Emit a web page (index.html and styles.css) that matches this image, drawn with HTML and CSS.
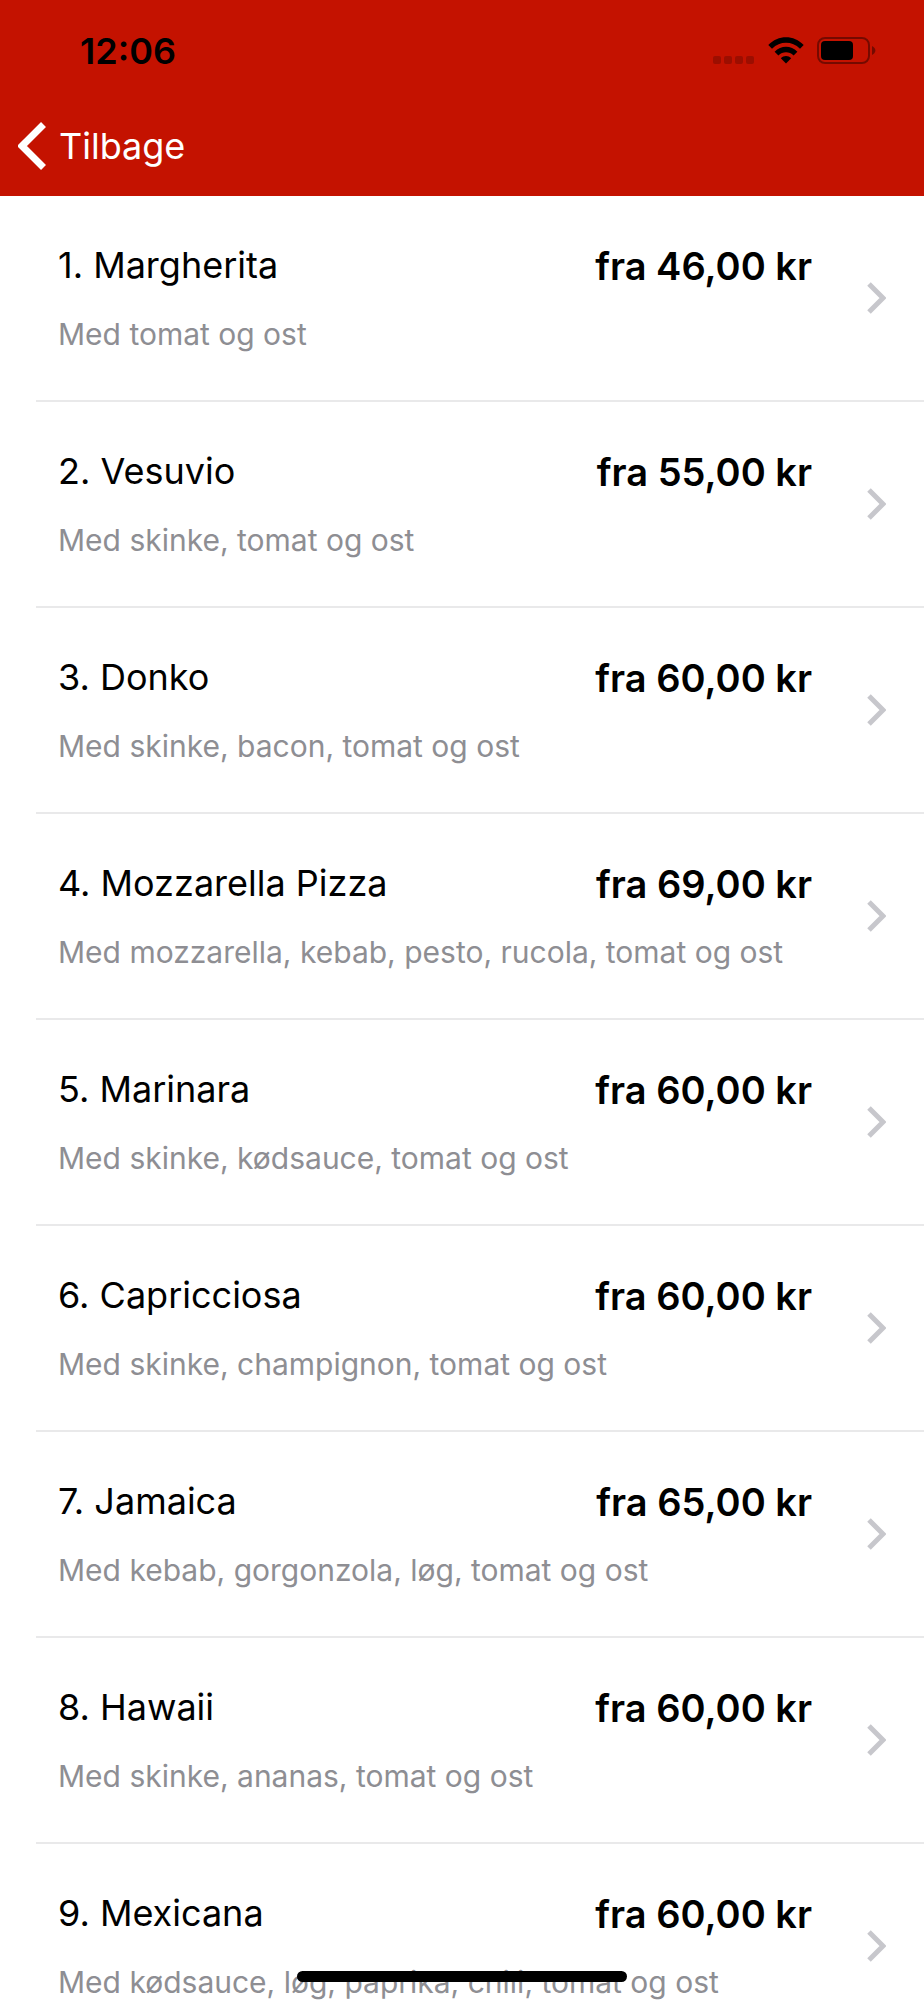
FILE: index.html
```html
<!DOCTYPE html>
<html lang="da">
<head>
<meta charset="utf-8">
<meta name="viewport" content="width=device-width, initial-scale=1">
<title>Pizza</title>
<link rel="stylesheet" href="styles.css">
</head>
<body>
<header class="header">
  <div class="status">
    <time class="clock">12:06</time>
    <div class="indicators">
      <svg class="signal" viewBox="0 0 42 8" aria-hidden="true"><rect width="8" height="8" rx="2"/><rect x="11" width="8" height="8" rx="2"/><rect x="22" width="8" height="8" rx="2"/><rect x="33" width="8" height="8" rx="2"/></svg>
      <svg class="wifi" viewBox="0 0 36 27" aria-hidden="true"><path d="M0.3 8C10-2.5 26-2.5 35.7 8L32 11.7C24 3.8 12 3.8 4 11.7Z"/><path d="M6.6 14.7C13 8 23 8 29.4 14.7L25.6 18.4C21.2 14.2 14.8 14.2 10.4 18.4Z"/><path d="M12.8 21.2C15.8 18.3 20.2 18.3 23.2 21.2L18 26.6Z"/></svg>
      <svg class="battery" viewBox="0 0 59 27" aria-hidden="true"><rect class="battery-shell" x="1" y="1" width="51" height="25" rx="7"/><rect x="4" y="4" width="32" height="19" rx="4"/><path class="battery-cap" d="M55 9C59.500 11 59.500 16 55 18Z"/></svg>
    </div>
  </div>
  <nav class="nav">
    <button class="back" type="button"><svg class="back-icon" viewBox="0 0 28 48" aria-hidden="true"><path d="M25.500 2.500L4 24L25.500 45.500"/></svg>Tilbage</button>
  </nav>
</header>
<main>
  <ul class="menu">
    <li><a class="item" href="#1"><span class="name">1. Margherita</span><span class="price">fra 46,00 kr</span><span class="desc">Med tomat og ost</span><svg class="chevron" viewBox="0 0 19 32" aria-hidden="true"><path d="M2 2L16 16L2 30"/></svg></a></li>
    <li><a class="item" href="#2"><span class="name">2. Vesuvio</span><span class="price">fra 55,00 kr</span><span class="desc">Med skinke, tomat og ost</span><svg class="chevron" viewBox="0 0 19 32" aria-hidden="true"><path d="M2 2L16 16L2 30"/></svg></a></li>
    <li><a class="item" href="#3"><span class="name">3. Donko</span><span class="price">fra 60,00 kr</span><span class="desc">Med skinke, bacon, tomat og ost</span><svg class="chevron" viewBox="0 0 19 32" aria-hidden="true"><path d="M2 2L16 16L2 30"/></svg></a></li>
    <li><a class="item" href="#4"><span class="name">4. Mozzarella Pizza</span><span class="price">fra 69,00 kr</span><span class="desc">Med mozzarella, kebab, pesto, rucola, tomat og ost</span><svg class="chevron" viewBox="0 0 19 32" aria-hidden="true"><path d="M2 2L16 16L2 30"/></svg></a></li>
    <li><a class="item" href="#5"><span class="name">5. Marinara</span><span class="price">fra 60,00 kr</span><span class="desc">Med skinke, kødsauce, tomat og ost</span><svg class="chevron" viewBox="0 0 19 32" aria-hidden="true"><path d="M2 2L16 16L2 30"/></svg></a></li>
    <li><a class="item" href="#6"><span class="name">6. Capricciosa</span><span class="price">fra 60,00 kr</span><span class="desc">Med skinke, champignon, tomat og ost</span><svg class="chevron" viewBox="0 0 19 32" aria-hidden="true"><path d="M2 2L16 16L2 30"/></svg></a></li>
    <li><a class="item" href="#7"><span class="name">7. Jamaica</span><span class="price">fra 65,00 kr</span><span class="desc">Med kebab, gorgonzola, løg, tomat og ost</span><svg class="chevron" viewBox="0 0 19 32" aria-hidden="true"><path d="M2 2L16 16L2 30"/></svg></a></li>
    <li><a class="item" href="#8"><span class="name">8. Hawaii</span><span class="price">fra 60,00 kr</span><span class="desc">Med skinke, ananas, tomat og ost</span><svg class="chevron" viewBox="0 0 19 32" aria-hidden="true"><path d="M2 2L16 16L2 30"/></svg></a></li>
    <li><a class="item" href="#9"><span class="name">9. Mexicana</span><span class="price">fra 60,00 kr</span><span class="desc">Med kødsauce, løg, paprika, chili, tomat og ost</span><svg class="chevron" viewBox="0 0 19 32" aria-hidden="true"><path d="M2 2L16 16L2 30"/></svg></a></li>
  </ul>
</main>
<div class="home-bar"></div>
</body>
</html>
```
FILE: styles.css
```css
* {
  box-sizing: border-box;
}

body {
  margin: 0;
  height: 100vh;
  display: flex;
  flex-direction: column;
  overflow: hidden;
  background: #fff;
  color: #000;
  font-family: Inter, "Liberation Sans", sans-serif;
}

.header {
  flex: none;
  background: #c41200;
}

.status {
  height: 101px;
  padding: 0 48px 0 80px;
  display: flex;
  align-items: center;
  justify-content: space-between;
}

.clock {
  font-size: 36px;
  font-weight: 600;
}

.indicators {
  display: flex;
  align-items: flex-end;
  gap: 13px;
}

.signal {
  width: 42px;
  height: 8px;
  opacity: 0.2;
}

.wifi {
  width: 36px;
  height: 27px;
}

.battery {
  width: 59px;
  height: 27px;
}

.battery-shell {
  fill: none;
  stroke: #000;
  stroke-width: 2;
  opacity: 0.4;
}

.battery-cap {
  opacity: 0.4;
}

.nav {
  height: 95px;
  padding: 0 18px;
  display: flex;
  align-items: flex-start;
}

.back {
  display: flex;
  align-items: center;
  gap: 13px;
  height: 90px;
  padding: 0;
  border: 0;
  background: none;
  color: #fff;
  font-family: inherit;
  font-size: 36px;
}

.back-icon {
  width: 28px;
  height: 48px;
  fill: none;
  stroke: #fff;
  stroke-width: 7;
}

main {
  flex: 1;
  min-height: 0;
  overflow: hidden;
}

.menu {
  margin: 0;
  padding: 0 0 0 36px;
  list-style: none;
}

.item {
  display: grid;
  grid-template-columns: 1fr auto 74px;
  grid-template-rows: 46px 36px;
  row-gap: 27px;
  align-items: start;
  padding: 47px 38px 48px 22px;
  border-bottom: 2px solid #e9e9ea;
  color: #000;
  text-decoration: none;
  white-space: nowrap;
}

.name {
  font-size: 36px;
}

.price {
  font-size: 38px;
  font-weight: 600;
}

.desc {
  grid-column: 1 / 3;
  grid-row: 2;
  color: #8e8e93;
  font-size: 30px;
}

.chevron {
  grid-column: 3;
  grid-row: 1 / 3;
  place-self: center end;
  width: 19px;
  height: 32px;
  fill: none;
  stroke: #c7c7cc;
  stroke-width: 5;
}

.home-bar {
  position: fixed;
  bottom: 18px;
  left: 50%;
  width: 330px;
  height: 11px;
  margin-left: -165px;
  border-radius: 6px;
  background: #000;
}
```
